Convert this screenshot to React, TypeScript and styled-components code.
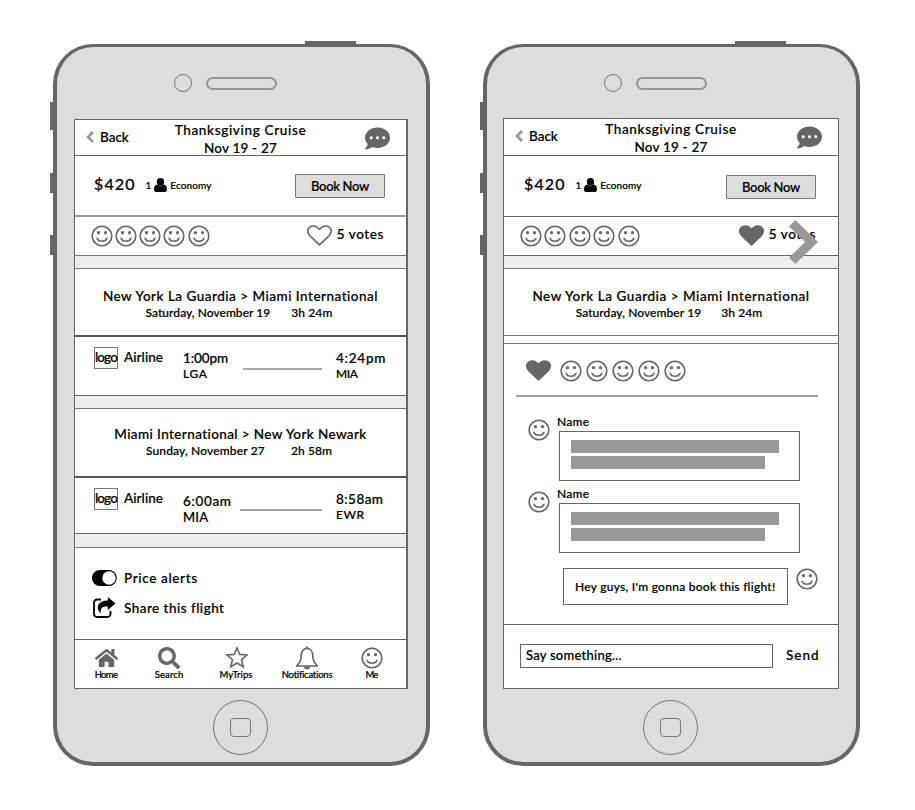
import React from "react";
import styled, { createGlobalStyle } from "styled-components";
import { FaCommentDots, FaHome, FaSearch } from "react-icons/fa";

const INK = "#666";

const GlobalStyle = createGlobalStyle`
  * { box-sizing: border-box; }
  body { margin: 0; background: #fff; color: #000; font-family: Lato, "Open Sans", sans-serif; font-weight: 500; -webkit-text-stroke: 0.2px #000; }
  svg { display: block; flex: none; }
`;

/* ---------- device ---------- */

const Page = styled.main`
  display: flex;
  gap: 53px;
  width: 915px;
  height: 810px;
  padding: 44px 0 0 53px;
  overflow: hidden;
`;

const Device = styled.section<{ $inset: number; $top: number }>`
  position: relative;
  flex: none;
  width: 377px;
  height: 722px;
  padding: ${(p) => p.$top}px 0 0 ${(p) => p.$inset}px;
  background: #ddd;
  border: 4px solid ${INK};
  border-top-width: 3px;
  border-radius: 40px;
`;

const DeviceKey = styled.span<{ $x: number; $y: number; $w: number; $h: number }>`
  position: absolute;
  left: ${(p) => p.$x}px;
  top: ${(p) => p.$y}px;
  width: ${(p) => p.$w}px;
  height: ${(p) => p.$h}px;
  background: ${INK};
`;

const Earpiece = styled.div`
  position: absolute;
  top: 27px;
  left: 117px;
  display: flex;
  align-items: center;
  gap: 14px;
`;

const Camera = styled.span`
  width: 18px;
  height: 18px;
  border: 1.5px solid #777;
  border-radius: 50%;
`;

const Speaker = styled.span`
  width: 71px;
  height: 13px;
  border: 2px solid #949494;
  border-radius: 7px;
`;

const HomeKey = styled.span`
  position: absolute;
  left: 156px;
  top: 653px;
  display: grid;
  place-items: center;
  width: 55px;
  height: 55px;
  border: 1px solid #777;
  border-radius: 50%;
  &::after {
    content: "";
    width: 19px;
    height: 17px;
    border: 1px solid #777;
    border-radius: 4px;
  }
`;

const Screen = styled.div<{ $w: number; $h: number; $edge: number }>`
  display: flex;
  flex-direction: column;
  width: ${(p) => p.$w}px;
  height: ${(p) => p.$h}px;
  background: #fff;
  border: 1px solid ${INK};
  border-right-width: ${(p) => p.$edge}px;
  overflow: hidden;
`;

/* ---------- shared parts ---------- */

const Text = styled.span<{ $size?: number; $track?: number }>`
  display: block;
  flex: none;
  white-space: nowrap;
  font-size: ${(p) => p.$size ?? 13.5}px;
  line-height: 16px;
  letter-spacing: ${(p) => p.$track ?? 0}px;
`;

const Section = styled.div<{ $h: number; $line?: string; $lw?: number }>`
  display: flex;
  flex: none;
  align-items: flex-start;
  height: ${(p) => p.$h}px;
  border-bottom: ${(p) => p.$lw ?? 1}px solid ${(p) => p.$line ?? INK};
`;

const Band = styled.div<{ $h: number; $plain?: boolean }>`
  flex: none;
  height: ${(p) => p.$h}px;
  background: ${(p) => (p.$plain ? "#fff" : "#eee")};
  border-bottom: 1px solid #777;
`;

const HeaderBar = styled(Section)`
  display: grid;
  grid-template-columns: 84px 1fr 84px;
  align-items: start;
`;

const BackLink = styled.div`
  display: flex;
  align-items: center;
  gap: 6px;
  padding: 9px 0 0 11px;
`;

const HeaderTitle = styled.div`
  display: flex;
  flex-direction: column;
  align-items: center;
  gap: 2px;
  padding-top: 2px;
`;

const ChatButton = styled.div<{ $right: number }>`
  display: flex;
  justify-content: flex-end;
  padding: 6px ${(p) => p.$right}px 0 0;
  color: ${INK};
`;

const Fare = styled(Section)<{ $left: number }>`
  padding: 20px 0 0 ${(p) => p.$left}px;
`;

const FareDetail = styled.div<{ $gap: number }>`
  display: flex;
  align-items: center;
  gap: 3px;
  margin: 1px 0 0 ${(p) => p.$gap}px;
`;

const BookButton = styled.button<{ $drop: number; $right: number }>`
  width: 90px;
  height: 24px;
  margin: ${(p) => p.$drop}px ${(p) => p.$right}px 0 auto;
  padding: 0;
  background: #ddd;
  border: 1px solid #777;
  border-radius: 1px;
  color: #000;
  font: 500 13px/20px Lato, sans-serif;
  letter-spacing: -0.3px;
  -webkit-text-stroke: 0.2px #000;
`;

const Faces = styled.div<{ $gap: number }>`
  display: flex;
  gap: ${(p) => p.$gap}px;
`;

const VoteBar = styled(Section)<{ $left: number; $right: number }>`
  padding: 8px ${(p) => p.$right}px 0 ${(p) => p.$left}px;
`;

const Votes = styled.div`
  position: relative;
  display: flex;
  gap: 5px;
  margin-left: auto;
  & > span { margin-top: 1px; }
`;

const Route = styled(Section)<{ $top: number }>`
  flex-direction: column;
  align-items: center;
  padding-top: ${(p) => p.$top}px;
`;

const RouteMeta = styled.div<{ $gap: number; $shift: number }>`
  display: flex;
  gap: ${(p) => p.$gap}px;
  margin: 1px ${(p) => p.$shift}px 0 0;
`;

/* ---------- flight detail screen ---------- */

const Flight = styled(Section)`
  display: grid;
  grid-template-columns: 30px 59px 60px 93px 60px;
  padding: 10px 0 0 19px;
`;

const LogoBox = styled.div`
  display: grid;
  place-items: center;
  width: 24px;
  height: 22px;
  border: 1px solid #777;
  & > span { margin: -2px -1px 0; height: 14px; line-height: 14px; background: #fff; }
`;

const Stop = styled.div<{ $drop?: number }>`
  margin-top: ${(p) => p.$drop ?? 2}px;
`;

const FlightLine = styled.div<{ $w: number }>`
  justify-self: end;
  width: ${(p) => p.$w}px;
  height: 2px;
  margin: 21px 14px 0 0;
  background: #a6a6a6;
`;

const AirlineName = styled.div`
  padding-top: 2px;
`;

const Options = styled(Section)`
  flex-direction: column;
  gap: 8px;
  padding: 19px 0 0 17px;
`;

const Option = styled.div`
  display: grid;
  grid-template-columns: 32px auto;
  align-items: center;
  height: 22px;
`;

const TabBar = styled.nav`
  display: grid;
  grid-template-columns: 62px 64px 70px 72px 57px;
  padding-top: 6px;
`;

const Tab = styled.div`
  display: flex;
  flex-direction: column;
  align-items: center;
  color: ${INK};
  & > svg { height: 24px; }
  & > span { color: #000; line-height: 10px; }
`;

/* ---------- discussion screen ---------- */

const NextArrow = styled.svg`
  position: absolute;
  left: 50px;
  top: -5px;
`;

const Thread = styled(Section)`
  flex-direction: column;
  padding: 16px 0 0 12px;
`;

const Likes = styled.div`
  display: flex;
  gap: 9px;
  width: 302px;
  height: 37px;
  padding-left: 10px;
  border-bottom: 2px solid #a0a0a0;
`;

const CommentList = styled.div`
  height: 171px;
  padding-top: 17px;
`;

const Comment = styled.div`
  display: flex;
  gap: 7px;
  height: 72px;
  padding-left: 12px;
  & > svg { margin-top: 5px; }
`;

const CommentBox = styled.div`
  display: flex;
  flex-direction: column;
  gap: 3px;
  width: 241px;
  height: 50px;
  margin: 1px 0 0 2px;
  padding: 8px 0 0 11px;
  border: 1px solid ${INK};
`;

const Placeholder = styled.span<{ $w: number }>`
  width: ${(p) => p.$w}px;
  height: 13px;
  background: #999;
`;

const OwnMessage = styled.div`
  display: flex;
  gap: 8px;
  padding-left: 47px;
`;

const OwnBubble = styled.div`
  width: 225px;
  height: 37px;
  padding: 10px 0 0 11px;
  border: 1px solid ${INK};
`;

const Composer = styled.div`
  display: flex;
  align-items: center;
  gap: 13px;
  padding: 19px 0 0 16px;
  & > span { margin-top: -2px; }
`;

const ComposerField = styled.div`
  width: 253px;
  height: 24px;
  padding: 2px 0 0 5px;
  border: 1px solid ${INK};
`;

/* ---------- drawings ---------- */

const Face = () => (
  <svg width="22" height="22" viewBox="-11 -11 22 22" fill="none" stroke={INK} strokeWidth="1.6">
    <circle r="9.8" />
    <path d="M-5 2.2C-3.6 6.2 3.6 6.2 5 2.2" strokeLinecap="round" />
    <circle cx="-3.500" cy="-3.300" r="1.600" fill={INK} stroke="none" />
    <circle cx="3.500" cy="-3.300" r="1.600" fill={INK} stroke="none" />
  </svg>
);

const Heart = ({ filled = false }: { filled?: boolean }) => (
  <svg width="25" height="21" viewBox="0 0 25 21" fill={filled ? INK : "none"} stroke={INK} strokeWidth="1.6" strokeLinejoin="round">
    <path d="M12.5 19.8L3 10.800C-1.500 6 1.500 1 6.500 1C9.500 1 11.300 3 12.500 4.600C13.700 3 15.500 1 18.500 1C23.500 1 26.500 6 22 10.800Z" />
  </svg>
);

const BackChevron = () => (
  <svg width="8" height="14" viewBox="0 0 8 14" fill="none" stroke="#949494" strokeWidth="2.600">
    <path d="M7 2L2 7L7 12" />
  </svg>
);

const Traveller = () => (
  <svg width="13" height="14" viewBox="0 0 13 14">
    <path d="M3.500 6.600C1 6.800 0 8.500 0 11.400C0 13 1 14 2.500 14H10.500C12 14 13 13 13 11.400C13 8.500 12 6.800 9.500 6.600Q6.500 8.800 3.500 6.600Z" />
    <circle cx="6.500" cy="3.800" r="3.700" />
  </svg>
);

const Toggle = () => (
  <svg width="25" height="16" viewBox="0 0 25 16">
    <rect x="0.6" y="0.6" width="23.600" height="14.800" rx="7.400" stroke="#000" strokeWidth="1.200" />
    <circle cx="17" cy="8" r="6.700" fill="#fff" />
  </svg>
);

const ShareIcon = () => (
  <svg width="24" height="22" viewBox="0 0 24 22">
    <path d="M9 2.500H5.500Q2 2.500 2 6V16.500Q2 20 5.500 20H15Q18.500 20 18.500 16.500V14" fill="none" stroke="#000" strokeWidth="1.800" />
    <path d="M15.800 0L23.500 6.500L15.800 13V9.600C10.500 9.400 8.500 10.500 8.600 16.500C3 10 6 3.500 15.800 3.400Z" />
  </svg>
);

const StarIcon = () => (
  <svg width="24" height="24" viewBox="0 0 24 24" fill="none" stroke={INK} strokeWidth="1.600">
    <path d="M13 2L15.700 8.400L23 9L17.500 13.700L19.300 20.800L13 17L6.700 20.800L8.500 13.700L3 9L10.300 8.400Z" />
  </svg>
);

const BellIcon = () => (
  <svg width="24" height="24" viewBox="0 0 24 24" fill="none" stroke={INK} strokeWidth="1.600">
    <path d="M1.500 20C4.500 17.500 6.200 15 6.200 10C6.200 5.500 8.500 2.500 12 2.500S17.800 5.500 17.800 10C17.800 15 19.500 17.500 22.500 20Z" strokeLinejoin="round" />
    <path d="M12 0.500V3" strokeWidth="2.200" />
    <path d="M9 20.500H15A3 3 0 0 1 9 20.500Z" fill={INK} stroke="none" />
  </svg>
);

/* ---------- composition ---------- */

const Phone = ({ inset, top, children }: { inset: number; top: number; children: React.ReactNode }) => (
  <Device $inset={inset} $top={top}>
    <DeviceKey $x={-7} $y={55} $w={4} $h={28} />
    <DeviceKey $x={-7} $y={126} $w={4} $h={20} />
    <DeviceKey $x={-7} $y={188} $w={4} $h={20} />
    <DeviceKey $x={248} $y={-6} $w={51} $h={4} />
    <Earpiece>
      <Camera />
      <Speaker />
    </Earpiece>
    {children}
    <HomeKey />
  </Device>
);

const Header = ({ h, chatRight }: { h: number; chatRight: number }) => (
  <HeaderBar $h={h}>
    <BackLink>
      <BackChevron />
      <Text>Back</Text>
    </BackLink>
    <HeaderTitle>
      <Text $track={0.67}>Thanksgiving Cruise</Text>
      <Text $track={0.2}>Nov 19 - 27</Text>
    </HeaderTitle>
    <ChatButton $right={chatRight}>
      <FaCommentDots size={25} />
    </ChatButton>
  </HeaderBar>
);

type FareProps = { h: number; left: number; line?: string; lw?: number; drop: number; right: number };

const FareRow = ({ h, left, line, lw, drop, right }: FareProps) => (
  <Fare $h={h} $left={left} $line={line} $lw={lw}>
    <Text $size={16} $track={1.1}>$420</Text>
    <FareDetail $gap={10}>
      <Text $size={10}>1</Text>
      <Traveller />
      <Text $size={10} $track={0.08}>Economy</Text>
    </FareDetail>
    <BookButton $drop={drop} $right={right}>Book Now</BookButton>
  </Fare>
);

const FaceRow = ({ gap }: { gap: number }) => (
  <Faces $gap={gap}>
    {[0, 1, 2, 3, 4].map((i) => <Face key={i} />)}
  </Faces>
);

type RouteProps = {
  h: number;
  top: number;
  name: string;
  track: number;
  date: string;
  dateTrack: number;
  time: string;
  gap: number;
  shift: number;
  line?: string;
  lw?: number;
};

const RouteInfo = (p: RouteProps) => (
  <Route $h={p.h} $top={p.top} $line={p.line} $lw={p.lw}>
    <Text $track={p.track}>{p.name}</Text>
    <RouteMeta $gap={p.gap} $shift={p.shift}>
      <Text $size={12} $track={p.dateTrack}>{p.date}</Text>
      <Text $size={12} $track={0.1}>{p.time}</Text>
    </RouteMeta>
  </Route>
);

type End = { time: string; track: number; code: string; codeSize: number; codeTrack: number; drop: number };

const StopInfo = ({ end }: { end: End }) => (
  <Stop $drop={end.drop}>
    <Text $track={end.track}>{end.time}</Text>
    <Text $size={end.codeSize} $track={end.codeTrack}>{end.code}</Text>
  </Stop>
);

const FlightInfo = ({ h, from, to, line }: { h: number; from: End; to: End; line: number }) => (
  <Flight $h={h}>
    <LogoBox><Text $track={-0.83}>logo</Text></LogoBox>
    <AirlineName><Text $track={0.06}>Airline</Text></AirlineName>
    <StopInfo end={from} />
    <FlightLine $w={line} />
    <StopInfo end={to} />
  </Flight>
);

const tabs = [
  { label: "Home", track: -0.7, icon: <FaHome size={23} /> },
  { label: "Search", track: 0.08, icon: <FaSearch size={22} /> },
  { label: "MyTrips", track: 0.04, icon: <StarIcon /> },
  { label: "Notifications", track: -0.24, icon: <BellIcon /> },
  { label: "Me", track: -0.9, icon: <Face /> },
];

const CommentItem = () => (
  <Comment>
    <Face />
    <div>
      <Text $size={12} $track={0.24}>Name</Text>
      <CommentBox>
        <Placeholder $w={208} />
        <Placeholder $w={194} />
      </CommentBox>
    </div>
  </Comment>
);

const FlightScreen = () => (
  <Screen $w={334} $h={570} $edge={2}>
    <Header h={36} chatRight={16} />
    <FareRow h={61} left={19} line="#999" lw={2} drop={-2} right={21} />
    <VoteBar $h={39} $left={15.5} $right={22} $line="#777">
      <FaceRow gap={2.3} />
      <Votes>
        <Heart />
        <Text $track={0.59}>5 votes</Text>
      </Votes>
    </VoteBar>
    <Band $h={13} />
    <RouteInfo h={68} top={19} name="New York La Guardia > Miami International" track={0.5} date="Saturday, November 19" dateTrack={0.04} time="3h 24m" gap={21} shift={3} line="#555" lw={2} />
    <FlightInfo
      h={59}
      line={79}
      from={{ time: "1:00pm", track: -0.1, code: "LGA", codeSize: 12, codeTrack: 0.6, drop: 3 }}
      to={{ time: "4:24pm", track: 0.77, code: "MIA", codeSize: 12, codeTrack: -0.4, drop: 3 }}
    />
    <Band $h={13} />
    <RouteInfo h={69} top={17} name="Miami International > New York Newark" track={0.4} date="Sunday, November 27" dateTrack={0.15} time="2h 58m" gap={26} shift={3} line="#555" lw={2} />
    <FlightInfo
      h={56}
      line={82}
      from={{ time: "6:00am", track: 0.64, code: "MIA", codeSize: 13, codeTrack: 0.16, drop: 5 }}
      to={{ time: "8:58am", track: 0.44, code: "EWR", codeSize: 12, codeTrack: 0.52, drop: 3 }}
    />
    <Band $h={14} />
    <Options $h={92}>
      <Option><Toggle /><Text $track={0.64}>Price alerts</Text></Option>
      <Option><ShareIcon /><Text $track={0.47}>Share this flight</Text></Option>
    </Options>
    <TabBar>
      {tabs.map((t) => (
        <Tab key={t.label}>
          {t.icon}
          <Text $size={9.5} $track={t.track}>{t.label}</Text>
        </Tab>
      ))}
    </TabBar>
  </Screen>
);

const DiscussionScreen = () => (
  <Screen $w={336} $h={571} $edge={1}>
    <Header h={37} chatRight={16} />
    <FareRow h={61} left={20} drop={-1} right={22} />
    <VoteBar $h={39} $left={15.5} $right={22} >
      <FaceRow gap={2.5} />
      <Votes>
        <Heart filled />
        <Text $track={0.59}>5 votes</Text>
        <NextArrow width="29" height="44" viewBox="0 0 29 44" fill="none" stroke="#999" strokeWidth="9">
          <path d="M3.200 3.200L22.500 22L3.200 40.800" />
        </NextArrow>
      </Votes>
    </VoteBar>
    <Band $h={13} />
    <RouteInfo h={67} top={19} name="New York La Guardia > Miami International" track={0.55} date="Saturday, November 19" dateTrack={0.08} time="3h 24m" gap={20} shift={4} line="#777" />
    <Band $h={8} $plain />
    <Thread $h={281}>
      <Likes>
        <Heart filled />
        <FaceRow gap={4} />
      </Likes>
      <CommentList>
        <CommentItem />
        <CommentItem />
      </CommentList>
      <OwnMessage>
        <OwnBubble>
          <Text $size={12} $track={0.26}>Hey guys, I'm gonna book this flight!</Text>
        </OwnBubble>
        <Face />
      </OwnMessage>
    </Thread>
    <Composer>
      <ComposerField>
        <Text $size={13} $track={0.24}>Say something...</Text>
      </ComposerField>
      <Text $track={1}>Send</Text>
    </Composer>
  </Screen>
);

export default function App() {
  return (
    <>
      <GlobalStyle />
      <Page>
        <Phone inset={17} top={72}>
          <FlightScreen />
        </Phone>
        <Phone inset={16} top={71}>
          <DiscussionScreen />
        </Phone>
      </Page>
    </>
  );
}
